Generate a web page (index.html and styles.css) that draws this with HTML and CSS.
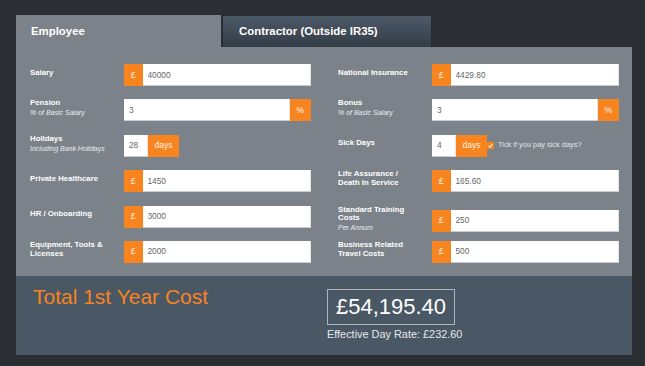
FILE: index.html
```html
<!DOCTYPE html>
<html lang="en">
<head>
<meta charset="utf-8">
<title>Employee vs Contractor Cost</title>
<link rel="stylesheet" href="styles.css">
</head>
<body>
<div class="app">
  <div class="tabs">
    <div class="tab tab-active">Employee</div>
    <div class="tab tab-inactive">Contractor (Outside IR35)</div>
  </div>
  <div class="panel">
    <div class="col">
      <div class="row">
        <div class="label"><div class="name">Salary</div></div>
        <div class="field"><span class="addon addon-pound">£</span><input class="input" value="40000"></div>
      </div>
      <div class="row">
        <div class="label"><div class="name">Pension</div><div class="sub">% of Basic Salary</div></div>
        <div class="field"><input class="input" value="3"><span class="addon addon-pct">%</span></div>
      </div>
      <div class="row">
        <div class="label"><div class="name">Holidays</div><div class="sub">Including Bank Holidays</div></div>
        <div class="field"><input class="input input-short" value="28"><span class="addon addon-days">days</span></div>
      </div>
      <div class="row">
        <div class="label"><div class="name">Private Healthcare</div></div>
        <div class="field"><span class="addon addon-pound">£</span><input class="input" value="1450"></div>
      </div>
      <div class="row">
        <div class="label"><div class="name">HR / Onboarding</div></div>
        <div class="field"><span class="addon addon-pound">£</span><input class="input" value="3000"></div>
      </div>
      <div class="row">
        <div class="label"><div class="name">Equipment, Tools &amp; Licenses</div></div>
        <div class="field"><span class="addon addon-pound">£</span><input class="input" value="2000"></div>
      </div>
    </div>
    <div class="col">
      <div class="row">
        <div class="label"><div class="name">National Insurance</div></div>
        <div class="field"><span class="addon addon-pound">£</span><input class="input" value="4429.80"></div>
      </div>
      <div class="row">
        <div class="label"><div class="name">Bonus</div><div class="sub">% of Basic Salary</div></div>
        <div class="field"><input class="input" value="3"><span class="addon addon-pct">%</span></div>
      </div>
      <div class="row">
        <div class="label"><div class="name">Sick Days</div></div>
        <div class="field"><input class="input input-short" value="4"><span class="addon addon-days">days</span><span class="check"><svg viewBox="0 0 7 7" width="7" height="7"><path d="M1.5 3.8 L2.9 5 L5.6 2" fill="none" stroke="#fff" stroke-width="1.1"/></svg></span><span class="tick-text">Tick if you pay sick days?</span></div>
      </div>
      <div class="row">
        <div class="label"><div class="name">Life Assurance / Death In Service</div></div>
        <div class="field"><span class="addon addon-pound">£</span><input class="input" value="165.60"></div>
      </div>
      <div class="row">
        <div class="label"><div class="name">Standard Training Costs</div><div class="sub">Per Annum</div></div>
        <div class="field"><span class="addon addon-pound">£</span><input class="input" value="250"></div>
      </div>
      <div class="row">
        <div class="label"><div class="name">Business Related Travel Costs</div></div>
        <div class="field"><span class="addon addon-pound">£</span><input class="input" value="500"></div>
      </div>
    </div>
  </div>
  <div class="summary">
    <div class="total-title">Total 1st Year Cost</div>
    <div class="total-block">
      <div class="total-box">£54,195.40</div>
      <div class="day-rate">Effective Day Rate: £232.60</div>
    </div>
  </div>
</div>
</body>
</html>
```

FILE: styles.css
```css
* { box-sizing: border-box; }
html, body {
  margin: 0;
  padding: 0;
  background: #2b2f33;
  font-family: "Liberation Sans", Arial, sans-serif;
}
.app {
  width: 645px;
  height: 366px;
  padding: 15px 13px 0 16px;
}
.tabs {
  display: flex;
  height: 32px;
}
.tab {
  display: flex;
  align-items: center;
  height: 32px;
  color: #fff;
  font-weight: bold;
  font-size: 11.4px;
  padding-bottom: 1px;
}
.tab-active {
  width: 205px;
  background: #7b8289;
  padding-left: 15px;
}
.tab-inactive {
  width: 210px;
  margin-left: 1px;
  padding-left: 16px;
  background: linear-gradient(#4c5967, #333d47);
  border: 1px solid #272c31;
  border-bottom: none;
}
.panel {
  background: #7b8289;
  display: flex;
  gap: 27px;
  padding: 17px 13px 13px 14px;
}
.col {
  display: flex;
  flex-direction: column;
  gap: 13.4px;
  width: 281px;
}
.row {
  display: grid;
  grid-template-columns: 94px 187px;
  align-items: center;
  height: 22px;
}
.label {
  color: #fff;
  padding-bottom: 4px;
  padding-right: 16px;
}
.name {
  font-weight: bold;
  font-size: 7.8px;
  line-height: 8.8px;
}
.sub {
  font-style: italic;
  font-size: 7px;
  line-height: 9px;
  color: #eceef0;
  white-space: nowrap;
}
.field {
  display: flex;
  height: 22px;
  align-items: stretch;
}
.input {
  flex: 1;
  min-width: 0;
  height: 22px;
  margin: 0;
  border: none;
  border-bottom: 1px solid #c9cdd1;
  border-right: 1px solid #e3e5e7;
  background: #fff;
  color: #666;
  font-family: "Liberation Sans", Arial, sans-serif;
  font-size: 8.3px;
  padding: 0 0 0 5px;
  outline: none;
}
.input-short {
  flex: 0 0 24px;
  width: 24px;
}
.addon {
  display: flex;
  align-items: center;
  justify-content: center;
  background: #f7841f;
  color: #fff3e6;
  font-size: 9px;
  padding-bottom: 1px;
}
.addon-pound { width: 18.5px; }
.addon-pct { width: 21.5px; }
.addon-days { width: 31px; font-size: 8.6px; }
.check {
  align-self: center;
  display: flex;
  width: 7px;
  height: 7px;
  margin-top: -1px;
  background: #f7841f;
}
.tick-text {
  align-self: center;
  margin: -3px 0 0 4px;
  color: #e3e6e9;
  font-size: 7.4px;
  white-space: nowrap;
}
.summary {
  display: grid;
  grid-template-columns: 294px auto;
  align-items: start;
  height: 79px;
  background: #4a5764;
  padding: 13.5px 0 0 17px;
}
.total-title {
  margin-top: -4px;
  color: #f7841f;
  font-size: 21px;
  line-height: 24px;
}
.total-block {
  display: flex;
  flex-direction: column;
  align-items: flex-start;
}
.total-box {
  display: flex;
  align-items: center;
  justify-content: center;
  width: 128px;
  height: 36px;
  border: 1px solid #aeb5bc;
  color: #fff;
  font-size: 22px;
}
.day-rate {
  margin-top: 3px;
  color: #e6e9ec;
  font-size: 10.9px;
  line-height: 13px;
}
```
